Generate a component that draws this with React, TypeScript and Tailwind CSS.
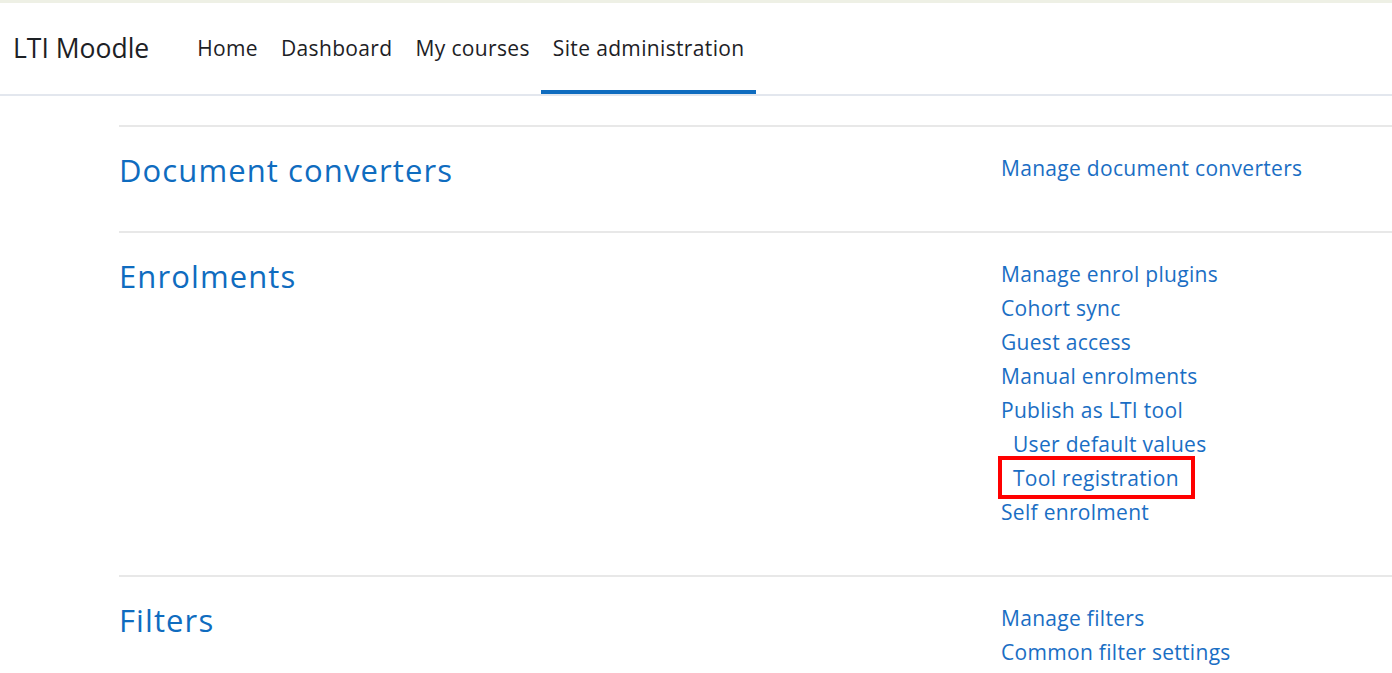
import React from "react";

type AdminLink = {
  label: string;
  indent?: boolean;
  highlight?: boolean;
};

type AdminSection = {
  title: string;
  links: AdminLink[];
};

const navItems = ["Home", "Dashboard", "My courses", "Site administration"];

const sections: AdminSection[] = [
  {
    title: "Document converters",
    links: [{ label: "Manage document converters" }],
  },
  {
    title: "Enrolments",
    links: [
      { label: "Manage enrol plugins" },
      { label: "Cohort sync" },
      { label: "Guest access" },
      { label: "Manual enrolments" },
      { label: "Publish as LTI tool" },
      { label: "User default values", indent: true },
      { label: "Tool registration", indent: true, highlight: true },
      { label: "Self enrolment" },
    ],
  },
  {
    title: "Filters",
    links: [{ label: "Manage filters" }, { label: "Common filter settings" }],
  },
];

function Navbar() {
  return (
    <header className="border-t-[3px] border-[#eef0e5] bg-white">
      <nav className="flex h-[93px] items-stretch border-b-2 border-[#e3e7ee] pl-[13px]">
        <a className="mr-[36px] flex items-center text-[26.5px] text-[#1d2125]">
          LTI Moodle
        </a>
        <ul className="flex items-stretch">
          {navItems.map((item) => {
            const active = item === "Site administration";
            return (
              <li
                key={item}
                className={`flex items-center pr-[11px] pl-3 text-[21px] tracking-[0.35px] text-[#1d2125] ${
                  active ? "border-b-4 border-[#0f6cbf] pt-1" : ""
                }`}
              >
                {item}
              </li>
            );
          })}
        </ul>
      </nav>
    </header>
  );
}

function SectionRow({ section }: { section: AdminSection }) {
  return (
    <div className="grid grid-cols-[882px_1fr] border-t-2 border-[#e8e8e8] pt-6 pb-[46px]">
      <h2 className="mt-[2px] -mb-[2px] text-[31px] leading-[34px] tracking-[1.1px] text-[#0f6cbf]">
        {section.title}
      </h2>
      <ul className="flex flex-col">
        {section.links.map((link) => (
          <li
            key={link.label}
            className={`h-[34px] text-[21px] leading-[34px] tracking-[0.3px] text-[#1a6ec4] ${
              link.indent ? "pl-3" : ""
            }`}
          >
            <span className="relative">
              {link.label}
              {link.highlight && (
                <span className="absolute -top-[8px] -bottom-[7px] -left-[15px] -right-[16px] border-4 border-[#ff0000]" />
              )}
            </span>
          </li>
        ))}
      </ul>
    </div>
  );
}

export default function App() {
  return (
    <div
      className="min-h-[673px] bg-white"
      style={{ fontFamily: '"Open Sans", "Noto Sans", sans-serif' }}
    >
      <Navbar />
      <main className="pt-[29px] pl-[119px]">
        {sections.map((section) => (
          <SectionRow key={section.title} section={section} />
        ))}
      </main>
    </div>
  );
}
